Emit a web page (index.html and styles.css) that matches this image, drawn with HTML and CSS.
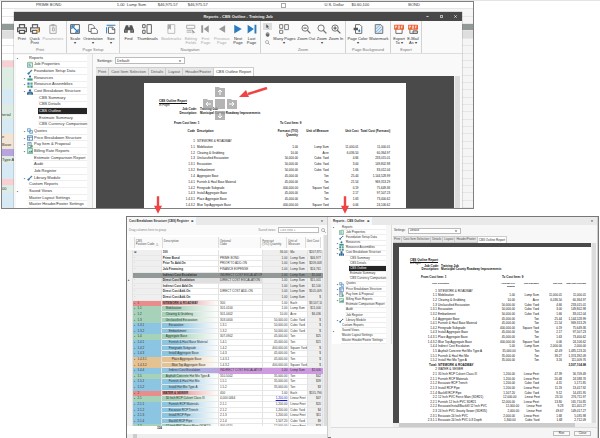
FILE: index.html
```html
<!DOCTYPE html>
<html lang="en">
<head>
<meta charset="utf-8">
<title>Reports - CBS Outline - Training Job</title>
<link rel="stylesheet" href="styles.css">
</head>
<body>
<svg class="sprite" aria-hidden="true">
  <symbol id="printer" viewBox="0 0 16 16"><path d="M4 6V1h8v5M3 12H1V6h14v6h-2" fill="none" stroke="#555" stroke-width="2"/><path d="M4 10h8v5H4z" fill="#fff" stroke="#555" stroke-width="2"/></symbol>
  <symbol id="quick" viewBox="0 0 16 16"><path d="M4 6V1h8v5M3 12H1V6h14v6h-2" fill="none" stroke="#666" stroke-width="2"/><path d="M4 10h7v5H4z" fill="#fff" stroke="#666" stroke-width="2"/><path d="M13 8l-4 5h3l-1 3 5-5h-3l2-3z" fill="#f0a030"/></symbol>
  <symbol id="params" viewBox="0 0 16 16"><path d="M3 2h10v13H3zM6 1h4v2H6zM7 6h3v5H7z" fill="none" stroke="#aaa" stroke-width="1.6"/></symbol>
  <symbol id="scale" viewBox="0 0 16 16"><path d="M1 1h14v14H1z" fill="#fff" stroke="#555" stroke-width="1.5"/><path d="M4 4l8 8M3 8V3h5M13 8v5H8" fill="none" stroke="#2a7cc0" stroke-width="1.8"/></symbol>
  <symbol id="orient" viewBox="0 0 16 16"><path d="M1 1h6l3 3v8H1z" fill="#fff" stroke="#666" stroke-width="1.4"/><path d="M5 7h7l3 3v5H5z" fill="#fff" stroke="#666" stroke-width="1.4"/></symbol>
  <symbol id="size" viewBox="0 0 16 16"><path d="M1 2h14M1 5v10" fill="none" stroke="#2a7cc0" stroke-width="1.6"/><path d="M4 5h7l3 3v7H4zM10 5v4h4" fill="#fff" stroke="#666" stroke-width="1.5"/></symbol>
  <symbol id="find" viewBox="0 0 16 16"><path d="M3 2h4v3h2V2h4l3 8v4h-6v-4H6v4H0v-4z" fill="#555"/><path d="M2 11h2M12 11h2" stroke="#fff"/></symbol>
  <symbol id="thumbs" viewBox="0 0 16 16"><path d="M1 1h4v5H1zM1 10h4v5H1zM8 1h7v14H8z" fill="none" stroke="#666" stroke-width="1.6"/></symbol>
  <symbol id="bookmark" viewBox="0 0 16 16"><path d="M3 1h11v14H3z" fill="none" stroke="#bbb" stroke-width="1.5"/><path d="M3 1h5v8L5.500 7 3 9z" fill="#aaa"/></symbol>
  <symbol id="editing" viewBox="0 0 16 16"><path d="M1 2h13v5H1zM1 10h8M1 13h8" fill="none" stroke="#aaa" stroke-width="1.5"/><path d="M9 8l6 6-3 0-1 2z" fill="#999"/></symbol>
  <symbol id="first" viewBox="0 0 16 16"><path d="M2 2h3v12H2zM14 2v12L6 8z" fill="#999"/></symbol>
  <symbol id="prev" viewBox="0 0 16 16"><path d="M13 2v12L3 8z" fill="#999"/></symbol>
  <symbol id="next" viewBox="0 0 16 16"><path d="M2 1v14l12-7z" fill="#2a7cc0"/></symbol>
  <symbol id="last" viewBox="0 0 16 16"><path d="M1 1v14l10-7zM12 1h3v14h-3z" fill="#2a7cc0"/></symbol>
  <symbol id="cursor" viewBox="0 0 16 16"><path d="M4 1v12l3-3 3 5 2-1-3-5h4z" fill="#555"/></symbol>
  <symbol id="hand" viewBox="0 0 16 16"><path d="M3 2h2v5h1V1h2v6h1V1h2v6h1V4h2v7l-3 4H6L1 8h2z" fill="#666"/></symbol>
  <symbol id="zoom" viewBox="0 0 16 16"><circle cx="6.500" cy="6.500" r="5" fill="none" stroke="#777" stroke-width="1.6"/><path d="M10 10l5 5" stroke="#777" stroke-width="2.200"/></symbol>
  <symbol id="zoomout" viewBox="0 0 16 16"><circle cx="6.500" cy="6.500" r="5" fill="none" stroke="#777" stroke-width="1.6"/><path d="M10 10l5 5M4 6.500h5" stroke="#777" stroke-width="2"/></symbol>
  <symbol id="zoomin" viewBox="0 0 16 16"><circle cx="6.500" cy="6.500" r="5" fill="none" stroke="#777" stroke-width="1.6"/><path d="M10 10l5 5M4 6.500h5M6.500 4v5" stroke="#666" stroke-width="2"/></symbol>
  <symbol id="pages" viewBox="0 0 16 16"><path d="M1 1h5v6H1zM9 1h6v8H9zM1 10h5v5H1z" fill="none" stroke="#777" stroke-width="1.5"/></symbol>
  <symbol id="pagecolor" viewBox="0 0 16 16"><path d="M4 1h7l3 3v11H4z" fill="#fff" stroke="#666" stroke-width="1.5"/><path d="M1 6h7v4H1z" fill="#555"/><path d="M10 8l2 3-2 2-2-2z" fill="#2a7cc0"/></symbol>
  <symbol id="watermark" viewBox="0 0 16 16"><path d="M2 1h9l3 3v11H2z" fill="#d5e6f3" stroke="#666" stroke-width="1.4"/><path d="M3 8l6-6M3 13l9-9M7 14l6-6" stroke="#5d9dce"/></symbol>
  <symbol id="pdf" viewBox="0 0 16 16"><path d="M3 7v8h10V7" fill="#fff" stroke="#666" stroke-width="1.5"/><rect y="1" width="16" height="8" rx="1" fill="#ee6135"/><path d="M2 7V3h2v2H2M7 3v4h2V3zM12 7V3h2M12 5h2" fill="none" stroke="#fff"/></symbol>
  <symbol id="pdfmail" viewBox="0 0 16 16"><path d="M3 7v8h5" fill="none" stroke="#666" stroke-width="1.5"/><rect y="1" width="16" height="8" rx="1" fill="#ee6135"/><path d="M2 7V3h2v2H2M7 3v4h2V3zM12 7V3h2M12 5h2" fill="none" stroke="#fff"/><path d="M8 11h7v4H8z" fill="#ddd" stroke="#555" stroke-width="1.5"/></symbol>
  <symbol id="i-job" viewBox="0 0 16 16"><path d="M1 2h14v12H1z" fill="#e8f3ea" stroke="#4aa36a" stroke-width="2"/><path d="M4 6h5M4 10h7" stroke="#3b7fb5" stroke-width="2"/></symbol>
  <symbol id="i-link" viewBox="0 0 16 16"><path d="M3 13L13 3" stroke="#2f78b5" stroke-width="3"/><circle cx="4" cy="12" r="3" fill="#2f78b5"/><circle cx="12" cy="4" r="2" fill="#777"/></symbol>
  <symbol id="i-person" viewBox="0 0 16 16"><circle cx="8" cy="4" r="3" fill="#2f6ea0"/><path d="M1 15V9h14v6z" fill="#3f9a80"/></symbol>
  <symbol id="i-assembly" viewBox="0 0 16 16"><path d="M1 1h6v6H1zM9 9h6v6H9z" fill="#3b85b8"/><path d="M9 1h6v6H9zM1 9h6v6H1z" fill="#59ad70"/></symbol>
  <symbol id="i-org" viewBox="0 0 16 16"><path d="M5 1h6v5H5zM0 9h5v6H0zM6 9h4v6H6zM11 9h5v6h-5zM7 6h2v3H7zM2 7h12v2H2z" fill="#2d6897"/></symbol>
  <symbol id="i-quote" viewBox="0 0 16 16"><path d="M1 2h8v7H1zM7 7h8v7H7z" fill="#e7f0f7" stroke="#4f8fbe" stroke-width="2"/></symbol>
  <symbol id="i-grid" viewBox="0 0 16 16"><path d="M1 2h14v12H1zM1 6h14M6 6v8" fill="#fff" stroke="#3270b0" stroke-width="2"/></symbol>
  <symbol id="i-doc" viewBox="0 0 16 16"><path d="M2 1h9v14H2z" fill="#fff" stroke="#4b80aa" stroke-width="2"/><path d="M4 5h5M4 9h5" stroke="#777" stroke-width="2"/><path d="M9 8h6v7H9z" fill="#58a777"/></symbol>
  <symbol id="i-bill" viewBox="0 0 16 16"><path d="M1 1h14v14H1z" fill="#d3ecd8" stroke="#58b070" stroke-width="2"/><path d="M3 12l4-4 2 2 5-5v7z" fill="#3879b0"/></symbol>
  <symbol id="i-down" viewBox="0 0 16 16"><path d="M3 6h10l-5 6z" fill="#555"/></symbol>
</svg>

<main class="figure">
  <section class="top-shot" aria-label="Floating report window">
    <div class="sheet" id="sheet"></div>
    <div class="window">
      <header class="titlebar">
        <span></span>
        <h1>Reports - CBS Outline - Training Job</h1>
        <div class="window-buttons">
          <button aria-label="Minimize"><svg viewBox="0 0 8 8"><path d="M1 4h6"/></svg></button><button aria-label="Maximize"><svg viewBox="0 0 8 8"><path d="M1 1h6v6H1z"/></svg></button><button aria-label="Close"><svg viewBox="0 0 8 8"><path d="M1 1l6 6M7 1L1 7"/></svg></button>
        </div>
      </header>
      <nav class="ribbon" id="ribbon" aria-label="Report tools"></nav>
      <div class="workspace">
        <ul class="tree" data-tree></ul>
        <div class="viewer">
          <div class="settings"><label for="set-a">Settings:</label><select id="set-a"><option>Default</option></select><svg><use href="#i-down"/></svg></div>
          <div class="tabs" data-tabs></div>
          <div class="preview">
            <article class="page" data-report="12"></article>
            <div class="vscroll"></div>
          </div>
        </div>
      </div>
    </div>
    <svg class="dock-guide" viewBox="0 0 34 35" aria-hidden="true">
      <path d="M12 1h4l1 1h5v9H12zM0 13h4l1 1h5v9H0zM12 13h10v10H12zM24 13h4l1 1h5v9H24zM12 25h10v9H12z" fill="#9b9b9b" fill-opacity=".75"/>
      <path d="M17 9V5M15 6l2-2 2 2M8 18H3M5 16l-2 2 2 2M26 18h5M29 16l2 2-2 2M17 27v4M15 30l2 2 2-2" fill="none" stroke="#fff"/>
    </svg>
    <svg class="pointer" viewBox="0 0 30 14"><path d="M28 1L9 7" stroke="#f04444" stroke-width="2.500"/><path d="M0 10L7 3l3 7z" fill="#f04444"/></svg>
  </section>

  <section class="bottom-shot" aria-label="Docked windows">
    <div class="register">
      <div class="dock-tabs"><button class="dock-tab">Cost Breakdown Structure (CBS) Register &nbsp; ⊗</button><svg><use href="#i-down"/></svg></div>
      <div class="group-bar"><span>Drag columns here to group</span><label for="saved">Saved views:</label><select id="saved"><option>CBS view 1</option></select><svg><use href="#zoom"/></svg></div>
      <div class="register-body">
        <table class="cbs">
          <thead><tr><th></th><th>CBS<br>Position Code &nbsp;△</th><th>Description</th><th>Optional<br>Code</th><th>Forecast<br>(T/O) Quantity</th><th>Unit of<br>Measure</th><th>Unit Cost</th></tr></thead>
          <tbody id="cbs"></tbody>
        </table>
        <div class="vscroll"></div>
      </div>
      <div class="count">324</div>
      <div class="hscroll"><i></i></div>
    </div>
    <div class="docked">
      <div class="dock-tabs"><button class="dock-tab">Reports - CBS Outline &nbsp; ⊗</button><svg><use href="#i-down"/></svg></div>
      <div class="workspace">
        <ul class="tree" data-tree></ul>
        <div class="viewer">
          <div class="settings"><label for="set-b">Settings:</label><select id="set-b"><option>Default</option></select><svg><use href="#i-down"/></svg></div>
          <div class="tabs" data-tabs></div>
          <div class="preview">
            <article class="page" data-report="29"></article>
            <div class="vscroll"></div>
          </div>
          <div class="hscroll"><i></i></div>
        </div>
      </div>
      <footer class="actions"><button>Run</button><button>Close</button></footer>
    </div>
    <svg class="drop first-drop" viewBox="0 0 10 22"><path d="M3.500 0h3v12H10L5 22 0 12h3.500z" fill="#f04444"/></svg>
    <svg class="drop second-drop" viewBox="0 0 10 22"><path d="M3.500 0h3v12H10L5 22 0 12h3.500z" fill="#f04444"/></svg>
  </section>
</main>
<script src="app.js"></script>
</body>
</html>
```
FILE: styles.css
```css
* { box-sizing: border-box; }
body { margin: 0; background: #fff; color: #333; font: 4px/4px "Liberation Sans", Arial, sans-serif; border-top: 1px solid #e4e4e4; }
button, select, table { font: inherit; color: inherit; }
button { margin: 0; padding: 0; border: 0; background: none; white-space: nowrap; }
h1, h2, p, ul { margin: 0; padding: 0; font: inherit; list-style: none; }
.sprite { display: none; }
.figure { padding-left: 1px; }

/* floating window over the sheet */
.top-shot { position: relative; display: grid; width: 79%; height: 208px; border: 1px solid #808080; overflow: hidden; }
.sheet, .window { grid-area: 1 / 1; min-width: 0; }
.sheet { display: grid; grid-auto-rows: 1fr; background: #f5f5f5; height: 206px; }
.strip { display: grid; grid-template-columns: 12px 1fr; border-bottom: 1px solid #e6e6e6; align-items: center; white-space: nowrap; overflow: hidden; }
.strip > span { align-self: stretch; padding-top: 1px; }
.white { background: #fff; }
.dark, .dark > span { background: #929a99; }
.light, .light > span { background: #dedede; }
.pink { background: #f8d0d4; }
.green { background: #dceee3; }
.blue { background: #d4eaf6; }
.orange { background: #f5e4d2; }
.purple { background: #b9a5dd; }
.ledger { display: grid; grid-template-columns: 22fr 81fr 10fr 31fr 30fr 93fr 44fr 27fr 57fr 65fr; align-items: center; background: #fff; align-self: stretch; }
.ledger input { width: 5px; height: 5px; margin: 0; appearance: none; border: 1px solid #aaa; }
.window { display: grid; grid-template-rows: 9px 33px 1fr; margin: 10px 11px 0 12px; height: 198px; background: #f9f9f9; box-shadow: 0 0 1px #555; }
.titlebar { display: grid; grid-template-columns: 1fr auto 1fr; align-items: center; background: #484848; color: #eee; }
.titlebar h1 { font-weight: bold; }
.window-buttons { display: flex; justify-content: flex-end; gap: 11px; padding-right: 5px; }
.window-buttons button { width: 3px; height: 3px; display: grid; }
.window-buttons svg { width: 3px; height: 3px; fill: none; stroke: #eee; stroke-width: 2; }

.ribbon { display: flex; border-bottom: 1px solid #ddd; background: #fafafa; }
.group { display: grid; grid-template-rows: 25px 6px; border-right: 1px solid #d2d2d2; padding-top: 2px; flex: none; }
.group > div { display: flex; justify-content: space-evenly; }
.group h2 { text-align: center; color: #777; }
.print, .setup { width: 53px; }
.navigation { width: 141px; }
.zooming { width: 85px; }
.background { width: 45px; }
.export { width: 31px; }
.tool { display: flex; flex-direction: column; align-items: center; line-height: 4px; min-width: 10px; }
.tool svg { width: 10px; height: 10px; margin: 1px 0 3px; flex: none; }
.tool.off { color: #aaa; }
.mini { display: grid; gap: 1px; align-content: start; }
.mini button { width: 9px; height: 7px; display: grid; place-items: center; }
.mini button:first-child { background: #ddd; }
.mini svg { width: 5px; height: 5px; }

.workspace { display: grid; grid-template-columns: 79px 1fr; min-height: 0; }
.tree { display: grid; grid-auto-rows: 1fr; height: 154px; border-right: 1px solid #ddd; padding: 1px 11px 0 2px; background: #f7f7f7; }
.tree li { display: grid; grid-template-columns: 6px 6px 1fr; align-items: center; background: #fff; }
.tree li > button { text-align: left; align-self: stretch; padding-left: 1px; border-bottom: 1px solid #eee; }
.tree svg { width: 6px; height: 6px; }
.tree .caret { width: 3px; height: 3px; justify-self: center; }
.tree .root { grid-template-columns: 12px 1fr; }
.tree .root .caret { justify-self: start; }
.tree .item { grid-template-columns: 6px 5px 6px 1fr; }
.tree .child { grid-template-columns: 22px 1fr; }
.tree .plain { grid-template-columns: 17px 1fr; }
.tree .active > button { background: #252525; color: #fff; }

.viewer { display: flex; flex-direction: column; min-width: 0; padding: 3px 2px 0 3px; }
.settings { display: flex; align-items: center; gap: 2px; height: 7px; padding-left: 1px; }
.settings select, .group-bar select { appearance: none; border: 1px solid #bbb; border-radius: 0; background: #fff; height: 7px; width: 70px; padding: 0 1px; }
.settings svg { width: 4px; height: 4px; margin-left: -9px; }
.tabs { display: flex; height: 9px; margin-top: 3px; }
.tabs button { border: 1px solid #ccc; border-left: 0; background: #e6e6e6; color: #555; padding: 0 2px; }
.tabs button:last-child { background: #fff; border-bottom: 0; color: #333; }
.preview { display: grid; grid-template-columns: 48px 1fr 48px 6px; flex: 1; min-height: 0; background: #4a4a4a; padding-top: 7px; }
.page { grid-column: 2; min-width: 0; background: #fff; padding: 16px 16px 0 15px; white-space: nowrap; overflow: hidden; color: #111; font-size: 3px; }
.vscroll { background: #dcdcdc; border-left: 1px solid #eee; }
.preview .vscroll { grid-column: 4; margin-top: -7px; }
.page h2 { font-weight: bold; text-decoration: underline; }
.meta { display: grid; grid-template-columns: 38px 1fr; column-gap: 3px; font-weight: bold; }
.meta dt { text-align: right; }
.meta dd, .meta { margin: 0; }
.range { display: grid; grid-template-columns: 106px 1fr; margin: 6px 0 4px 15px; font-weight: bold; }
.report { display: block; --cols: 38px 58fr 44fr 31fr 30fr 32fr; }
.report thead, .report tbody { display: flex; flex-direction: column; }
.report tr { display: grid; grid-template-columns: var(--cols); flex: 1; align-items: center; }
.report th, .report td { padding: 0; text-align: right; }
.report th { align-self: start; }
.report thead { height: 9px; }
.report tbody { height: 70px; }
.report .code { padding-right: 2px; }
.report .text { text-align: left; }
.report .total { font-weight: bold; }
.dock-guide { position: absolute; left: 201px; top: 84px; width: 34px; height: 35px; }
.pointer { position: absolute; left: 237px; top: 85px; width: 30px; height: 14px; }

/* docked windows */
.bottom-shot { position: relative; display: grid; grid-template-columns: 201fr 267fr; gap: 3px; margin: 7px 1px 0 125px; border: 1px solid #777; height: 222px; background: #f1f1f1; font-size: 3px; line-height: 3px; }
.register, .docked { display: flex; flex-direction: column; min-width: 0; border-right: 1px solid #ccc; }
.dock-tabs { display: flex; justify-content: space-between; align-items: center; height: 8px; background: #e9e9e9; padding-right: 3px; }
.dock-tab { align-self: stretch; background: #f8f8f8; font-weight: bold; padding: 0 2px; }
.dock-tabs svg { width: 4px; height: 4px; }
.group-bar { display: flex; align-items: center; gap: 2px; height: 10px; padding: 0 1px 0 2px; background: #fafafa; color: #888; }
.group-bar span { flex: 1; }
.group-bar select { width: 41px; height: 6px; }
.group-bar svg { width: 5px; height: 5px; }
.register-body { display: grid; grid-template-columns: 1fr 4px; height: 191px; }
.cbs { display: block; min-width: 0; background: #fff; white-space: nowrap; --cols: 6fr 29fr 58fr 44fr 27fr 19fr 15fr; }
.cbs tr { display: grid; grid-template-columns: var(--cols); min-height: 0; }
.cbs th { font-weight: normal; text-align: left; padding: 3px 1px 0; border-right: 1px solid #ddd; background: #fafafa; color: #555; }
.cbs thead tr { height: 11px; }
.cbs tbody { display: grid; grid-auto-rows: 1fr; height: 180px; }
.cbs td { padding: 1px 1px 0; border-right: 1px solid #e2e2e2; border-bottom: 1px solid #e8e8e8; overflow: hidden; min-width: 0; }
.cbs .num { text-align: right; }
.cbs td:nth-child(1) { background: #f3f3f3; border-bottom: 0; }
.cbs td:nth-child(7), .cbs .plain td:nth-child(2), .cbs .plain td:nth-child(n+5) { background: #efefef; }
.cbs tr td.name.d1 { padding-left: 4px; }
.cbs tr td.name.d2 { padding-left: 7px; }
.cbs tr td.name.d3 { padding-left: 10px; }
.cbs .plain .name, .cbs .red .name { font-weight: bold; }
.cbs .green, .cbs .blue, .cbs .orange, .cbs .red { background: #fff; }
.cbs .red { --tone: #e98c8c; }
.cbs .green { --tone: #a5d2b8; }
.cbs .blue { --tone: #8cc5e1; }
.cbs .orange { --tone: #e5c292; }
.cbs .violet { --tone: #8cc5e1; }
.cbs tr:not(.plain) td:nth-child(2) { background: var(--tone); border-bottom-color: var(--tone); }
.cbs tr:not(.plain) td:nth-child(3) { background: linear-gradient(90deg, var(--tone) 25%, #fff); }
.cbs .violet td:nth-child(n+4) { background: #cf9be0; border-color: #cf9be0; }
.cbs tr.violet:not(.plain) td:nth-child(3) { background: linear-gradient(90deg, #8cc5e1, #b9a6df); border-right-color: #b9a6df; }
.cbs .plain.picked td:nth-child(n+2) { background: #929a99; border-color: #929a99; }
.cbs .soft td:nth-child(3), .cbs .soft td:nth-child(4) { background: #dfdfdf; }
.cbs .linked td:nth-child(5) { color: #22c; text-decoration: underline; }
.count { flex: 1; background: #fff; padding: 1px 0 0 30px; font-weight: bold; }
.hscroll { height: 4px; background: #eee; padding: 0 6px; }
.hscroll i { display: block; width: 4px; height: 4px; background: #ccc; }
.bottom-shot .workspace { grid-template-columns: 61px 1fr; flex: 1; background: #f7f7f7; }
.bottom-shot .tree { height: 119px; padding: 0 8px 0 1px; }
.bottom-shot .tree svg { width: 5px; height: 5px; }
.bottom-shot .tree .caret { width: 3px; height: 3px; }
.bottom-shot .tree .root { grid-template-columns: 9px 1fr; }
.bottom-shot .tree .item { grid-template-columns: 4px 3px 6px 1fr; }
.bottom-shot .tree .child { grid-template-columns: 17px 1fr; }
.bottom-shot .tree .plain { grid-template-columns: 13px 1fr; }
.bottom-shot .viewer { padding: 3px 1px 0 1px; }
.bottom-shot .settings { height: 5px; }
.bottom-shot .settings select { width: 53px; height: 6px; }
.bottom-shot .tabs { height: 7px; }
.bottom-shot .tabs button { padding: 0 1px; }
.bottom-shot .preview { grid-template-columns: 6px 1fr 0 5px; padding-top: 4px; }
.bottom-shot .preview .vscroll { margin-top: -4px; }
.bottom-shot .page { padding: 12px 5px 0 11px; }
.bottom-shot .meta { grid-template-columns: 29px 1fr; column-gap: 2px; }
.bottom-shot .range { grid-template-columns: 81px 1fr; margin: 5px 0 3px 11px; }
.bottom-shot .report { --cols: 28px 43fr 34fr 24fr 23fr 24fr; }
.bottom-shot .report th { font-size: 2px; }
.bottom-shot .report thead { height: 7px; }
.bottom-shot .report tbody { height: 134px; }
.bottom-shot .report .code { padding-right: 1px; }
.bottom-shot .viewer .hscroll i { width: 92%; }
.actions { display: flex; justify-content: flex-end; gap: 4px; padding: 3px 6px; height: 11px; border-top: 1px solid #ddd; background: #f5f5f5; }
.actions button { width: 17px; height: 5px; border: 1px solid #bbb; background: #fafafa; line-height: 3px; }
.drop { position: absolute; top: -23px; width: 8px; height: 22px; }
.first-drop { left: 27px; }
.second-drop { left: 214px; }
```
FILE: app.js
```js
const use = (id, cls = '') => `<svg class="${cls}" aria-hidden="true"><use href="#${id}"/></svg>`;

const groups = [
  ['print', 'Print', [['printer', 'Print'], ['quick', 'Quick<br>Print'], ['params', 'Parameters', 1]]],
  ['setup', 'Page Setup', [['scale', 'Scale<br>▾'], ['orient', 'Orientation<br>▾'], ['size', 'Size<br>▾']]],
  ['navigation', 'Navigation', [['find', 'Find'], ['thumbs', 'Thumbnails'], ['bookmark', 'Bookmarks', 1], ['editing', 'Editing<br>Fields', 1], ['first', 'First<br>Page', 1], ['prev', 'Previous<br>Page', 1], ['next', 'Next<br>Page'], ['last', 'Last<br>Page']]],
  ['zooming', 'Zoom', [['pages', 'Many Pages<br>▾'], ['zoomout', 'Zoom Out'], ['zoom', 'Zoom<br>▾'], ['zoomin', 'Zoom In']]],
  ['background', 'Page Background', [['pagecolor', 'Page Color<br>▾'], ['watermark', 'Watermark']]],
  ['export', 'Export', [['pdf', 'Export<br>To ▾'], ['pdfmail', 'E-Mail<br>As ▾']]]
];
const mini = `<div class="mini"><button aria-label="Pointer">${use('cursor')}</button><button aria-label="Hand">${use('hand')}</button><button aria-label="Magnifier">${use('zoom')}</button></div>`;
document.getElementById('ribbon').innerHTML = groups.map(([cls, title, tools]) =>
  `<section class="group ${cls}"><div>${cls === 'zooming' ? mini : ''}${tools.map(([i, t, off]) =>
    `<button class="tool${off ? ' off' : ''}">${use(i)}<span>${t}</span></button>`).join('')}</div><h2>${title}</h2></section>`).join('');

const tree = [
  ['root', 'Reports', 'c'], ['item', 'Job Properties', 'i-job'], ['item', 'Foundation Setup Data', 'i-link'],
  ['item', 'Resources', 'i-person', 'c'], ['item', 'Resource Assemblies', 'i-assembly', 'c'], ['item', 'Cost Breakdown Structure', 'i-org', 'c'],
  ['child', 'CBS Summary'], ['child', 'CBS Details'], ['child active', 'CBS Outline'], ['child', 'Estimate Summary'], ['child', 'CBS Currency Comparison'],
  ['item', 'Quotes', 'i-quote', 'c'], ['item', 'Price Breakdown Structure', 'i-grid', 'c'], ['item', 'Pay Item & Proposal', 'i-doc', 'c'], ['item', 'Billing Rate Reports', 'i-bill', 'c'],
  ['plain', 'Estimate Comparison Report'], ['plain', 'Audit'], ['plain', 'Job Register'], ['item', 'Library Module', 'i-link', 'c'],
  ['root', 'Custom Reports'], ['root', 'Saved Views', 'c'], ['root', 'Master Layout Settings'], ['root', 'Master Header/Footer Settings']
];
const caret = on => on ? use('i-down', 'caret') : '<span></span>';
document.querySelectorAll('[data-tree]').forEach(el => {
  el.innerHTML = tree.map(([cls, text, a, b]) => {
    const lead = cls === 'root' ? caret(a) : cls === 'item' ? '<span></span>' + caret(b) + use(a) : '<span></span>';
    return `<li class="${cls}">${lead}<button>${text.replace('&', '&amp;')}</button></li>`;
  }).join('');
});

document.querySelectorAll('[data-tabs]').forEach(el => {
  el.innerHTML = ['Print', 'Cost Item Selection', 'Details', 'Layout', 'Header/Footer', 'CBS Outline Report'].map(t => `<button>${t}</button>`).join('');
});

const strips = 'white white white dark light white white white pink green green green blue blue green green blue blue orange orange purple green blue blue pink green blue blue'.split(' ');
const stripText = { 15: 'terial', 18: 'e', 19: 'Base', 21: 'Type A', 25: '00' };
document.getElementById('sheet').innerHTML = strips.map((tone, i) => {
  const wide = tone === 'dark' || tone === 'light' ? tone : '';
  const ledger = i ? '<span></span>' : '<div class="ledger"><i></i><span>PRIME BOND</span><span>1.00</span><span>Lump Sum</span><span>$46,975.57</span><span>$46,975.57</span><input type="checkbox" aria-label="Included"><span>U.S. Dollar</span><span>$0.60,100</span><span>BOND</span></div>';
  return `<div class="strip ${wide}"><span class="${tone}">${stripText[i] || ''}</span>${ledger}</div>`;
}).join('');

const lines = `1|SITEWORK & ROADWAY
1.1|Mobilization|1.00|Lump Sum|11,000.01|11,000.01
1.2|Clearing & Grubbing|10.00|Acre|6,036.50|60,364.97
1.3|Unclassified Excavation|50,000.00|Cubic Yard|4.66|233,015.01
1.3.1|Excavation|50,000.00|Cubic Yard|3.00|149,802.98
1.3.2|Embankment|50,000.00|Cubic Yard|1.66|83,012.04
1.4|Aggregate Base|45,000.00|Ton|25.44|1,144,528.99
1.4.1|Furnish & Haul Base Material|45,000.00|Ton|21.54|969,313.29
1.4.2|Finegrade Subgrade|400,000.00|Square Yard|0.19|75,649.36
1.4.3|Install Aggregate Base|45,000.00|Ton|2.17|97,507.23
1.4.3.1|Place Aggregate Base|45,000.00|Ton|1.63|73,400.62
1.4.3.2|Blue Top Aggregate Base|400,000.00|Square Yard|0.06|24,106.62
1.4.4|Indirect Cost Escalation|1.00|Lump Sum|2,000.00|2,000.00
1.5|Asphalt Concrete Hot Mix Type A|35,000.00|Ton|42.49|1,485,123.20
1.5.1|Furnish & Haul Hot Mix|35,000.00|Ton|39.27|1,374,392.09
1.5.2|Install Hot Mix Type A|35,000.00|Ton|3.16|111,009.76
Total:|SITEWORK & ROADWAY||||3,507,104.98
2|WATER & SEWER
2.1|30 Inch RCP Culvert Class III|1,200.00|Linear Feet|47.39|56,709.49
2.1.1|Furnish RCP Materials|1,200.00|Linear Feet|20.48|24,588.76
2.1.2|Excavate RCP Trench|1,200.00|Cubic Yard|4.31|5,171.85
2.1.3|Install RCP Pipe|1,200.00|Linear Feet|11.19|13,417.92
2.1.4|Backfill RCP Pipe|1,507.20|Cubic Yard|9.12|14,431.95
2.2|12 Inch PVC Force Main (SDR21)|12,000.00|Linear Feet|23.10|276,711.97
2.2.1|Furnish 12 Inch PVC SDR21|12,000.00|Linear Feet|13.80|165,710.85
2.2.2|Excavate/Install/Backfill 12 Inch PVC|12,000.00|Linear Feet|9.28|111,401.27
2.3|24 Inch PVC Gravity Sewer (SDR35)|2,000.00|Linear Feet|49.67|149,017.27
2.3.1|Excavate 24 Inch PVC|2,000.00|Linear Feet|1.68|5,035.98
2.3.1.1|Excavate 24 Inch PVC 0-8 Depth|1,300.00|Cubic Yard|1.68|2,712.09`.split('\n').map(l => l.replace('&', '&amp;').split('|'));
document.querySelectorAll('[data-report]').forEach(el => {
  const body = lines.slice(0, +el.dataset.report).map(l => {
    const [code, name, qty = '', unit = '', cost = '', total = ''] = l;
    return `<tr class="${code === 'Total:' ? 'total' : ''}"><td class="code">${code}</td><td class="text">${name}</td><td>${qty}</td><td>${unit}</td><td>${cost}</td><td>${total}</td></tr>`;
  }).join('');
  el.innerHTML = `<h2>CBS Outline Report</h2><p>In Flight</p>
    <dl class="meta"><dt>Job Code:</dt><dd>Training Job</dd><dt>Description:</dt><dd>Municipal County Roadway Improvements</dd></dl>
    <div class="range"><span>From Cost Item: 1</span><span>To Cost Item: 9</span></div>
    <table class="report"><thead><tr><th class="code">Code</th><th class="text">Description</th><th>Forecast (T/O)<br>Quantity</th><th>Unit of Measure</th><th>Unit Cost</th><th>Total Cost (Forecast)</th></tr></thead><tbody>${body}</tbody></table>`;
});

const cbs = `plain|⊞|100||36.00|Mo|$207,871
plain||Prime Bond|PRIME BOND|1.00|Lump Sum|$46,977
plain||Prior To Add-On|PRIOR TO ADD-ON|1.00|Lump Sum|$209,008
plain||Job Financing|FINANCE EXPENSE|1.00|Lump Sum|$24,761
plain picked||Indirect Cost Escalation|INDIRECT COST ESCALATION|1.00|Lump Sum|$5,004
plain soft||Direct Cost Escalation|DIRECT COST ESCALATION|1.00|Lump Sum|$15,001
plain||Indirect Cost Add-On||1.00|Lump Sum|$2,100
plain||Direct Cost Add-On|DIRECT COST ADD-ON|1.00|Lump Sum|$105,009
plain||Direct Cost Add-On||1.00|Lump Sum|$
red|1|SITEWORK & ROADWAY|300|1.00|Each|$3,507,104
green|1.1|Mobilization|301-0100|1.00|Lump Sum|$11,000
green|1.2|Clearing & Grubbing|301-0402|10.00|Acre|$6,036
green|1.3|Unclassified Excavation|303-0400|50,000.00|Cubic Yard|$
blue|1.3.1|Excavation|1.3.1|50,000.00|Cubic Yard|$
blue|1.3.2|Embankment|1.3.2|50,000.00|Cubic Yard|$
green|1.4|Aggregate Base|307-0902|45,000.00|Ton|$25
blue|1.4.1|Furnish & Haul Base Material|1.4.1|45,000.00|Ton|$21
blue|1.4.2|Finegrade Subgrade|1.4.2|400,000.00|Square Yard|$
blue|1.4.3|Install Aggregate Base|1.4.3|45,000.00|Ton|$
orange|1.4.3.1|Place Aggregate Base|1.4.3.1|45,000.00|Ton|$
orange|1.4.3.2|Blue Top Aggregate Base|1.4.3.2|400,000.00|Square Yard|$
violet|1.4.4|Indirect Cost Escalation|INDIRECT COST ESCALATION|1.00|Lump Sum|$2,000
green|1.5|Asphalt Concrete Hot Mix Type A|310-5002|35,000.00|Ton|$42
blue|1.5.1|Furnish & Haul Hot Mix|1.5.1|35,000.00|Ton|$39
blue|1.5.2|Install Hot Mix Type A|1.5.2|35,000.00|Ton|$3
red|2|WATER & SEWER|400|1.00|Each|$555,796
green linked|2.1|30 Inch RCP Culvert Class III|4,000 0464|1,200.00|Linear Feet|$47
blue|2.1.1|Furnish RCP Materials|2.1.1|1,200.00|Linear Feet|$20
blue|2.1.2|Excavate RCP Trench|2.1.2|1,200.00|Cubic Yard|$4
blue|2.1.3|Install RCP Pipe|2.1.3|1,200.00|Linear Feet|$11
blue|2.1.4|Backfill RCP Pipe|2.1.4|1,507.20|Cubic Yard|$9
green|2.2|12 Inch PVC Force Main (SDR21)|400-0110|12,000.00|Linear Feet|$23`.split('\n');
document.getElementById('cbs').innerHTML = cbs.map((line, i) => {
  const [tone, code, name, opt, qty, unit, cost] = line.replace('&', '&amp;').split('|');
  const depth = tone.startsWith('plain') ? 0 : Math.min(code.split('.').length - 1, 3);
  const mark = tone.startsWith('plain') ? (code || '·') : `▪ &nbsp; ${code}`;
  return `<tr class="${tone}"><td>${i === 5 ? '▸' : ''}</td><td>${mark}</td><td class="name d${depth}">${name}</td><td>${opt}</td><td class="num">${qty}</td><td>${unit}</td><td class="num">${cost}</td></tr>`;
}).join('');
```
